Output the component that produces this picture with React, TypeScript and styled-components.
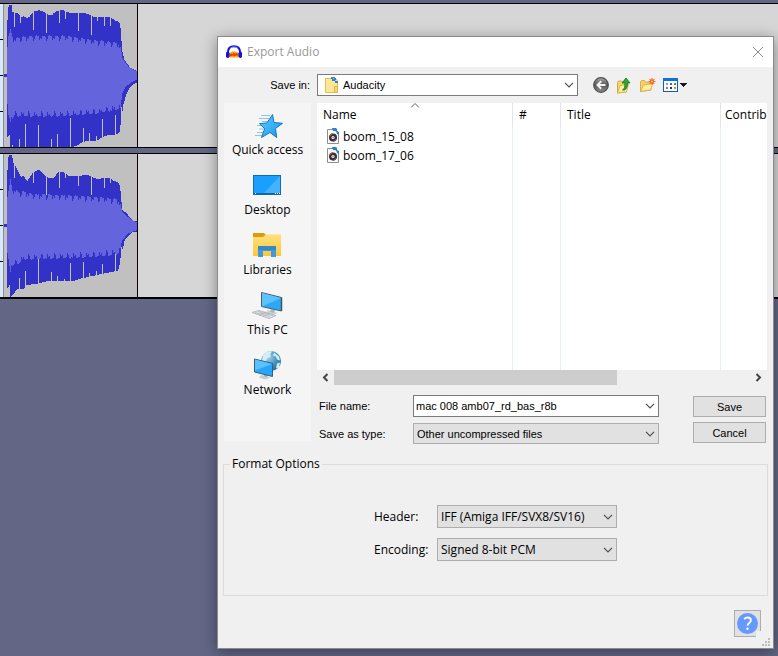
import React from "react";
import styled, { createGlobalStyle } from "styled-components";

const UI_FONT = '"Open Sans", "Noto Sans", sans-serif';
const FORM_FONT = '"Liberation Sans", Arial, sans-serif';

const GlobalStyle = createGlobalStyle`
  * { box-sizing: border-box; }
  body { margin: 0; background: #636685; font-family: ${UI_FONT}; font-size: 12px; line-height: 16px; color: #000; }
  button, input, select { font: inherit; color: inherit; margin: 0; }
`;

/* ---------- Editor behind the dialog ---------- */

const Workspace = styled.div`
  position: relative;
  min-height: 100vh;
  overflow: hidden;
  background: #636685;
  padding-top: 3px;
`;

const Tracks = styled.div`
  display: flex;
  flex-direction: column;
  gap: 5px;
`;

const TrackRow = styled.div`
  display: flex;
  height: 145px;
  border-top: 1px solid #000;
  border-bottom: 1px solid #000;
  background: #d6d6d6;
`;

const Ruler = styled.div`
  display: flex;
  flex-direction: column;
  justify-content: space-evenly;
  width: 4px;
  background: #d8e8ff;
  border-right: 1px solid #8c8c8c;
`;

const Tick = styled.span`
  height: 1px;
  background: #000;
`;

const Clip = styled.div`
  display: flex;
  width: 134px;
  background: #c0c0c0;
  border-right: 1px solid #100000;
`;

const TracksEnd = styled.div`
  height: 1px;
  background: #000;
`;

type Point = [number, number];

interface Wave {
  top: Point[];
  bottom: Point[];
  rmsTop: Point[];
  rmsBottom: Point[];
  topGaps: Point[];
  bottomGaps: Point[];
}

/* Envelopes are sampled at three units per column. */
const leftWave: Wave = {
  top: [[10,48],[13,8],[16,3],[23,3],[24,23],[30,26],[42,28],[50,40],[58,36],[68,42],[76,38],[88,23],[104,19],[116,21],[128,31],[144,34],[148,28],[158,20],[178,18],[188,24],[203,28],[238,26],[250,30],[268,38],[318,39],[333,50],[342,52],[348,60],[354,138],[360,166],[368,178],[378,190],[399,201]],
  bottom: [[10,398],[16,393],[19,429],[203,429],[220,424],[233,416],[250,410],[278,410],[298,398],[313,393],[338,391],[346,383],[350,358],[352,308],[356,326],[358,300],[366,273],[376,253],[388,240],[399,236]],
  rmsTop: [[10,128],[13,96],[19,76],[24,96],[30,98],[90,92],[188,92],[280,106],[342,112],[350,128],[354,160],[360,170],[373,188],[399,203]],
  rmsBottom: [[10,300],[13,333],[19,353],[23,333],[30,322],[100,323],[188,322],[278,314],[342,302],[350,308],[354,268],[363,250],[380,236],[399,226]],
  topGaps: [[31,68],[49,56],[88,78],[127,86],[166,56],[184,46],[223,81],[262,92],[280,50],[301,66],[319,66]],
  bottomGaps: [[25,423],[46,405],[64,360],[103,363],[142,405],[160,390],[199,342],[238,372],[256,387],[277,396],[295,345],[334,333]],
};

const rightWave: Wave = {
  top: [[10,48],[13,8],[16,3],[23,3],[28,28],[34,35],[44,56],[50,68],[58,66],[70,81],[78,68],[86,57],[100,48],[110,50],[118,60],[133,72],[148,71],[163,55],[178,55],[193,65],[208,67],[250,63],[278,75],[313,71],[328,80],[344,86],[348,98],[354,168],[366,176],[378,191],[388,201],[399,201]],
  bottom: [[10,403],[16,393],[19,429],[26,423],[38,405],[58,405],[68,393],[98,389],[128,382],[210,380],[233,373],[278,363],[308,357],[342,350],[348,323],[352,278],[356,288],[360,261],[373,245],[388,233],[399,233]],
  rmsTop: [[10,128],[13,110],[19,76],[24,106],[34,102],[46,112],[58,108],[83,116],[188,120],[278,126],[342,132],[350,148],[354,173],[378,195],[399,205]],
  rmsBottom: [[10,298],[19,353],[24,322],[48,312],[58,302],[188,298],[278,294],[342,286],[350,278],[354,258],[373,238],[399,228]],
  topGaps: [[31,71],[88,87],[127,123],[166,101],[184,73],[223,95],[262,123],[301,101],[319,86]],
  bottomGaps: [[46,372],[64,351],[103,315],[142,354],[160,366],[181,375],[199,327],[238,324],[256,357],[277,351],[295,330],[334,300]],
};

const JITTER = [3, 4, 6, 19, 14, 3, 2, 5, 4, 17, 9, 12, 4];

function sample(points: Point[], x: number) {
  for (let i = 1; i < points.length; i++) {
    if (x <= points[i][0]) {
      const [x0, y0] = points[i - 1];
      const [x1, y1] = points[i];
      return y0 + ((y1 - y0) * Math.max(0, x - x0)) / (x1 - x0);
    }
  }
  return points[points.length - 1][1];
}

function columns(wave: Wave, rms: boolean) {
  let d = "";
  for (let col = 3; col < 133; col++) {
    const x = col * 3 + 1;
    let top = sample(rms ? wave.rmsTop : wave.top, x);
    let bottom = sample(rms ? wave.rmsBottom : wave.bottom, x);
    if (rms) {
      if (x > 24 && x < 350) {
        top += JITTER[col % 13];
        bottom += 18 - JITTER[(col + 5) % 13];
      }
    } else {
      const topGap = wave.topGaps.find(([gx]) => Math.floor(gx / 3) === col);
      const bottomGap = wave.bottomGaps.find(([gx]) => Math.floor(gx / 3) === col);
      if (topGap) top = topGap[1];
      if (bottomGap) bottom = bottomGap[1];
    }
    const y0 = Math.round(top / 3);
    const y1 = Math.round(bottom / 3);
    d += `M${col} ${y0}h1V${y1}h-1z`;
  }
  return d;
}

const Waveform = ({ wave }: { wave: Wave }) => (
  <svg width="133" height="143" viewBox="0 0 133 143" shapeRendering="crispEdges" aria-hidden="true">
    <rect x="0" y="70" width="4" height="3" fill="#3232c8" />
    <path d={columns(wave, false)} fill="#3232c8" />
    <path d={columns(wave, true)} fill="#6464dc" />
  </svg>
);

const Track = ({ wave }: { wave: Wave }) => (
  <TrackRow>
    <Ruler><Tick /><Tick /><Tick /></Ruler>
    <Clip><Waveform wave={wave} /></Clip>
  </TrackRow>
);

/* ---------- Dialog frame ---------- */

const Dialog = styled.section`
  position: absolute;
  top: 36px;
  left: 217px;
  right: 4px;
  background: #f0f0f0;
  border: 1px solid #8b8b8f;
  box-shadow: 0 3px 14px rgba(0, 0, 0, 0.4);
`;

const TitleBar = styled.header`
  display: flex;
  align-items: center;
  gap: 5px;
  height: 30px;
  padding: 0 9px 0 8px;
  background: #fff;
  color: #999;
`;

const Title = styled.h1`
  flex: 1;
  margin: 0;
  font-size: 12px;
  font-weight: 400;
`;

const IconButton = styled.button`
  display: flex;
  align-items: center;
  justify-content: center;
  padding: 0;
  border: 0;
  background: transparent;
`;

const Browser = styled.div`
  display: grid;
  grid-template-columns: 87px minmax(0, 1fr);
  column-gap: 6px;
  align-items: start;
  padding: 0 6px;
`;

const LookInLabel = styled.label`
  padding: 10px 1px 0 0;
  text-align: right;
  font-family: ${FORM_FONT};
  font-size: 11px;
`;

const LookInBar = styled.div`
  display: flex;
  align-items: center;
  height: 36px;
`;

const Tools = styled.div`
  display: flex;
  align-items: center;
  gap: 7px;
  margin-left: 15px;
`;

/* ---------- Combo boxes ---------- */

const ComboFrame = styled.div<{ $light?: boolean; $width?: number; $height?: number }>`
  display: flex;
  align-items: center;
  position: relative;
  width: ${(p) => (p.$width ? `${p.$width}px` : "100%")};
  height: ${(p) => p.$height ?? 22}px;
  background: ${(p) => (p.$light ? "#fff" : "#e1e1e1")};
  border: 1px solid ${(p) => (p.$light ? "#7a7a7a" : "#adadad")};
`;

const Select = styled.select<{ $form?: boolean; $indent?: number }>`
  appearance: none;
  width: 100%;
  height: 100%;
  border: 0;
  border-radius: 0;
  outline: 0;
  background: transparent;
  padding: 0 20px 0 ${(p) => p.$indent ?? 3}px;
  font-family: ${(p) => (p.$form ? FORM_FONT : UI_FONT)};
  font-size: ${(p) => (p.$form ? 11 : 12)}px;
`;

const TextInput = styled.input`
  flex: 1;
  min-width: 0;
  height: 100%;
  border: 0;
  outline: 0;
  background: transparent;
  padding: 0 2px;
  font-family: ${FORM_FONT};
  font-size: 11px;
`;

const ChevronSlot = styled.span`
  position: absolute;
  right: 3px;
  top: 0;
  bottom: 0;
  display: flex;
  align-items: center;
  pointer-events: none;
`;

const FolderSlot = styled.span`
  position: absolute;
  left: 6px;
  top: 0;
  bottom: 0;
  display: flex;
  align-items: center;
  pointer-events: none;
`;

const Chevron = () => (
  <ChevronSlot>
    <svg width="10" height="6" viewBox="0 0 10 6" fill="none" stroke="#505050" strokeWidth="1.2" aria-hidden="true">
      <path d="M1 .8 5 4.8 9 .8" />
    </svg>
  </ChevronSlot>
);

/* ---------- Places bar ---------- */

const Places = styled.nav`
  display: flex;
  flex-direction: column;
  gap: 5px;
  background: #f5f5f5;
  padding-bottom: 43px;
`;

const Place = styled.button`
  display: flex;
  flex-direction: column;
  align-items: center;
  border: 0;
  background: transparent;
  padding: 7px 0 0;
  white-space: nowrap;
`;

/* ---------- File list ---------- */

const FileArea = styled.div`
  display: flex;
  flex-direction: column;
`;

const ListView = styled.div`
  height: 267px;
  overflow: hidden;
  background: #fff;
`;

const FileTable = styled.table`
  width: 100%;
  height: 100%;
  table-layout: fixed;
  border-collapse: separate;
  border-spacing: 0;
`;

const ColumnHead = styled.th<{ $width?: number; $last?: boolean }>`
  position: relative;
  width: ${(p) => (p.$width ? `${p.$width}px` : "auto")};
  height: 24px;
  padding: 0 0 0 ${(p) => (p.$last ? 4 : 6)}px;
  border-right: ${(p) => (p.$last ? "0" : "1px solid #e5e5e5")};
  font-weight: 400;
  text-align: left;
  white-space: nowrap;
`;

const SortMark = styled.svg`
  position: absolute;
  top: 0;
  left: 50%;
  transform: translateX(-50%);
`;

const Cell = styled.td<{ $last?: boolean }>`
  height: 19px;
  padding: 0 0 0 9px;
  border-right: ${(p) => (p.$last ? "0" : "1px solid #e8f1fb")};
`;

const Filler = styled.tr`
  height: 100%;
`;

const FileName = styled.span`
  display: flex;
  align-items: center;
  gap: 2px;
  height: 19px;
`;

const ScrollBar = styled.div`
  display: flex;
  align-items: stretch;
  height: 15px;
`;

const ScrollTrack = styled.div`
  flex: 1;
`;

const ScrollThumb = styled.div`
  width: 68%;
  height: 15px;
  background: #cdcdcd;
`;

const ScrollButton = styled(IconButton)`
  width: 17px;
`;

/* ---------- Name and type ---------- */

const NameForm = styled.div`
  display: flex;
  gap: 34px;
  padding: 10px 1px 0 0;
`;

const Fields = styled.div`
  flex: 1;
  display: grid;
  grid-template-columns: 96px minmax(0, 1fr);
  row-gap: 6px;
  align-items: center;
  font-family: ${FORM_FONT};
  font-size: 11px;
`;

const FieldLabel = styled.label`
  padding-left: 2px;
`;

const Actions = styled.div`
  display: flex;
  flex-direction: column;
  gap: 5px;
  padding-top: 1px;
`;

const PushButton = styled.button`
  width: 73px;
  height: 21px;
  padding: 0;
  border: 1px solid #adadad;
  background: #e1e1e1;
  font-family: ${FORM_FONT};
  font-size: 11px;
`;

/* ---------- Format options ---------- */

const OptionsBox = styled.fieldset`
  margin: 12px 5px 0;
  padding: 33px 0 34px;
  min-width: 0;
  border: 1px solid #dcdcdc;
`;

const Legend = styled.legend`
  margin-left: 6px;
  padding: 0 2px;
`;

const OptionGrid = styled.div`
  display: grid;
  grid-template-columns: 63px 180px;
  row-gap: 10px;
  justify-content: center;
  align-items: center;
`;

const Footer = styled.footer`
  display: flex;
  justify-content: flex-end;
  padding: 14px 12px 11px;
`;

const HelpButton = styled(IconButton)`
  width: 27px;
  height: 27px;
  border: 1px solid #adadad;
  background: #e1e1e1;
`;

const SizeGrip = styled.span`
  position: absolute;
  right: 0;
  bottom: 0;
  width: 17px;
  height: 17px;
  background: #f0f0f0;
`;

/* ---------- Icons ---------- */

const AudacityIcon = () => (
  <svg width="16" height="16" viewBox="0 0 16 16" aria-hidden="true">
    <path d="M3 13V9.500l2-1.500 1.500-1 1 1 1-1 1.500 1 1.500 0 1.500 1.500V13l-2 .8-1-.6-2 .6-2-.6-1.500.6z" fill="#ffb000" />
    <path d="M3 10.800l2-1.300 1.500.5 1-1.500 1.500 1.200 1.500-.7 1.500 1.200 1 .6-1 1-2-.2-1.500.9-2-.9-1.500.8z" fill="#ee3a00" />
    <path d="M2 9V8C2 4.300 4.500 2.200 8 2.200s6 2.100 6 5.800V9" fill="none" stroke="#1212e6" strokeWidth="2" />
    <path d="M4.500 3.900C6.500 2.600 9.500 2.600 11.500 3.900" fill="none" stroke="#8a9bff" strokeWidth=".9" />
    <rect x="0" y="7.500" width="3.500" height="6.500" rx="1.700" fill="#1212e6" />
    <rect x="12.500" y="7.500" width="3.500" height="6.500" rx="1.700" fill="#1212e6" />
  </svg>
);

const CloseIcon = () => (
  <svg width="12" height="12" viewBox="0 0 12 12" stroke="#8a8a8a" strokeWidth="1" aria-hidden="true">
    <path d="M1 1l10 10M11 1L1 11" />
  </svg>
);

const SyncMark = () => (
  <g fill="#2485cf">
    <path d="M6 0h4l1 1v3L9 3 7 3z" />
    <path d="M10 3l3 1v3l-2-1z" />
  </g>
);

const FolderSheetIcon = () => (
  <svg width="16" height="18" viewBox="0 0 16 18" aria-hidden="true">
    <path d="M1.500 2.500h10l2 2v12h-12z" fill="#ffe694" stroke="#e2bd55" />
    <path d="M10.500 10.500h3v6h-3z" fill="#f8d775" stroke="#dcb64d" />
    <path d="M7 1h4v1h1v3h2v2h-3V5H8V3H7z" fill="#2f86c8" />
    <path d="M9 2h1v1H9zM11 4h1v1h-1z" fill="#8cc4ee" />
  </svg>
);

const AudioFileIcon = () => (
  <svg width="15" height="17" viewBox="0 0 15 17" aria-hidden="true">
    <path d="M1.500 1.500h8l3 3v11h-11z" fill="#fafafa" stroke="#8e8e8e" />
    <circle cx="7" cy="9.500" r="4" fill="#3b3034" />
    <path d="M4 8a3.500 3.500 0 0 1 3-2.500" fill="none" stroke="#c0603e" strokeWidth="1" />
    <path d="M10 11a3.500 3.500 0 0 1-3 2.500" fill="none" stroke="#75599a" strokeWidth="1" />
    <circle cx="7" cy="9.500" r="1.600" fill="#f3e9dd" />
    <circle cx="7" cy="9.500" r=".6" fill="#555" />
    <SyncMark />
  </svg>
);

const BackIcon = () => (
  <svg width="16" height="16" viewBox="0 0 16 16" aria-hidden="true">
    <defs>
      <linearGradient id="ball" x1="0" y1="0" x2="0" y2="1">
        <stop offset="0" stopColor="#a8a8a8" /><stop offset=".5" stopColor="#585858" /><stop offset="1" stopColor="#8f8f8f" />
      </linearGradient>
    </defs>
    <circle cx="8" cy="8" r="7.300" fill="url(#ball)" stroke="#4f4f4f" strokeWidth="1.200" />
    <path d="M12.500 8H5M8.200 4.300L4.500 8l3.700 3.700" fill="none" stroke="#f4f4f4" strokeWidth="2" />
  </svg>
);

const UpIcon = () => (
  <svg width="16" height="17" viewBox="0 0 16 17" aria-hidden="true">
    <path d="M1.500 5.500l1-1.500h3l1 1h3.500v10l-8.500 1z" fill="#f6d873" stroke="#c79a2c" strokeWidth=".8" />
    <path d="M1.500 16L4 8.500l8.500-1.500-2 8z" fill="#ffee9f" stroke="#d2a93c" strokeWidth=".8" />
    <path d="M6.500 13c2-1 2.500-3 2.300-7H6L10 1l4 5h-2.500c.2 4-1.500 8-5 7z" fill="#35a534" stroke="#147a1b" strokeWidth=".8" />
  </svg>
);

const NewFolderIcon = () => (
  <svg width="17" height="16" viewBox="0 0 17 16" aria-hidden="true">
    <path d="M1.500 14.500V5l1-1.500h3l1 1.500H12v8z" fill="#f4d36b" stroke="#cda23a" strokeWidth=".8" />
    <path d="M1.500 14.500L4.500 8l9.500-1.500-2.500 6.500z" fill="#ffeda0" stroke="#d2a93c" strokeWidth=".8" />
    <path d="M13 1v7M9.500 4.500h7M10.600 2.100l4.800 4.800M15.400 2.100l-4.800 4.800" stroke="#ff6a1e" strokeWidth="1.100" />
    <circle cx="13" cy="4.500" r="1.500" fill="#ffd9a0" stroke="#e63f12" strokeWidth=".8" />
  </svg>
);

const ViewIcon = () => (
  <svg width="24" height="15" viewBox="0 0 24 15" shapeRendering="crispEdges" aria-hidden="true">
    <rect x=".5" y=".5" width="14" height="13" fill="#fff" stroke="#0a5cd0" />
    <rect x="0" y="0" width="15" height="3" fill="#1070e0" />
    <path d="M3 5h2v2H3z" fill="#9b8fc4" /><path d="M7 5h2v2H7z" fill="#3b68c8" /><path d="M11 5h2v2h-2z" fill="#33a04a" />
    <path d="M3 9h2v2H3z" fill="#e0663a" /><path d="M7 9h2v2H7z" fill="#1c2f8e" /><path d="M11 9h2v2h-2z" fill="#c79a20" />
    <path d="M17 5h7v1h-1v1h-1v1h-1v1h-1V8h-1V7h-1V6h-1z" fill="#1a1a1a" />
  </svg>
);

const StarIcon = () => (
  <svg width="32" height="32" viewBox="0 0 32 32" aria-hidden="true">
    <defs>
      <linearGradient id="star" x1="0" y1="0" x2="1" y2="1">
        <stop offset="0" stopColor="#62caff" /><stop offset="1" stopColor="#1597ee" />
      </linearGradient>
    </defs>
    <path d="M9 5.500h9M7 8.500h10M10 11.500h6M5 15.500h9M7 19h7M5 22.500h8M3 25.500h8" stroke="#8fc3e6" strokeWidth="1" />
    <path d="M20.500 4.500l1.500 8 8.500.8-7 5.200 1.200 9-6.700-5-8.500 5 3.200-8.800-5.200-5 7.500-.8z" fill="url(#star)" stroke="#1776bd" strokeWidth="1" />
  </svg>
);

const DesktopIcon = () => (
  <svg width="32" height="32" viewBox="0 0 32 32" aria-hidden="true">
    <rect x="1.500" y="5.500" width="27" height="19" fill="#1a9fff" stroke="#0f6fb4" />
    <path d="M28 6v17H12z" fill="#45b2ff" />
    <path d="M2 23h26v1.500H2z" fill="#0a66aa" />
    <path d="M3 23.500h1M23 23.500h1M25 23.500h1M27 23.500h1" stroke="#fff" />
  </svg>
);

const LibrariesIcon = () => (
  <svg width="32" height="32" viewBox="0 0 32 32" aria-hidden="true">
    <defs>
      <linearGradient id="folder" x1="0" y1="0" x2="0" y2="1">
        <stop offset="0" stopColor="#ffdf7c" /><stop offset="1" stopColor="#fbc83b" />
      </linearGradient>
    </defs>
    <path d="M1 3h11l2 2-2 2H1z" fill="#dc9c0c" />
    <path d="M1 7h10l3-2.500h15V26H1z" fill="url(#folder)" />
    <path d="M6 27V16h18v11h-5v-6h-8v6z" fill="#3f99dc" />
    <path d="M6 16h18v4H6z" fill="#3289ca" />
  </svg>
);

const ComputerIcon = () => (
  <svg width="32" height="32" viewBox="0 0 32 32" aria-hidden="true">
    <path d="M15 20l8 2 3 1-5 2-6-2z" fill="#cfd4d8" />
    <path d="M19 19l4 1-1 3-4-1z" fill="#aeb6bc" />
    <path d="M9.500 2.500l20 5v13.500l-20-4.500z" fill="#2aa9fb" stroke="#4a5f6d" />
    <path d="M10 3l19 5-19 8.500z" fill="#5cc3ff" />
    <path d="M29.500 7.500v13.500" stroke="#47545c" strokeWidth="1.500" />
    <path d="M0 22.500l7-2 17 5-7 3z" fill="#e6e9eb" stroke="#a7adb2" strokeWidth=".8" />
    <path d="M3 22.500l15 4.300M6 21.500l15 4.300M7 25l7-3M11 26.300l6-3" stroke="#aab0b5" strokeWidth=".8" />
  </svg>
);

const NetworkIcon = () => (
  <svg width="32" height="32" viewBox="0 0 32 32" aria-hidden="true">
    <defs>
      <radialGradient id="globe" cx=".35" cy=".3" r=".8">
        <stop offset="0" stopColor="#a9d6ec" /><stop offset=".5" stopColor="#4e9cc4" /><stop offset="1" stopColor="#1d6690" />
      </radialGradient>
    </defs>
    <circle cx="19" cy="11" r="10" fill="url(#globe)" />
    <path d="M11 5c3-4 7-4 9-3.500l-2 3 1 2-4 2-1 3-4-1zM22 2.500l5 4 1 4-3-1-1-3-3-1zM25 13.500l3-1-1 5-3 1z" fill="#d7edf5" />
    <path d="M9 25l6 1 3 2-5 1.500-6-2z" fill="#c9ced2" />
    <path d="M12 23l3 1v3l-3-1z" fill="#9fa8ae" />
    <path d="M2.500 9l18 4.500v13l-18-4.500z" fill="#25a6fa" stroke="#3c5e74" />
    <path d="M3 9.500l17 4.500L3 20.500z" fill="#59c1ff" />
  </svg>
);

const HelpIcon = () => (
  <svg width="21" height="21" viewBox="0 0 21 21" fill="none" aria-hidden="true">
    <circle cx="10.500" cy="10.500" r="10.500" fill="#6699ff" />
    <path d="M7.200 6.200c1-1.400 2.200-1.700 3.400-1.700 2 0 3.300 1 3.300 2.700 0 2.700-3.400 2.900-3.400 5.600" stroke="#fff" strokeWidth="1.800" />
    <circle cx="10.500" cy="15.800" r="1.200" fill="#fff" />
  </svg>
);

const places = [
  { name: "Quick access", Icon: StarIcon },
  { name: "Desktop", Icon: DesktopIcon },
  { name: "Libraries", Icon: LibrariesIcon },
  { name: "This PC", Icon: ComputerIcon },
  { name: "Network", Icon: NetworkIcon },
];

const files = ["boom_15_08", "boom_17_06"];

const ScrollArrow = ({ d }: { d: string }) => (
  <svg width="7" height="9" viewBox="0 0 7 9" fill="none" stroke="#444" strokeWidth="2" aria-hidden="true">
    <path d={d} />
  </svg>
);

export default function App() {
  return (
    <Workspace>
      <GlobalStyle />
      <Tracks>
        <Track wave={leftWave} />
        <Track wave={rightWave} />
      </Tracks>
      <TracksEnd />

      <Dialog role="dialog" aria-labelledby="dialog-title">
        <TitleBar>
          <AudacityIcon />
          <Title id="dialog-title">Export Audio</Title>
          <IconButton type="button" aria-label="Close"><CloseIcon /></IconButton>
        </TitleBar>

        <Browser>
          <LookInLabel htmlFor="look-in">Save in:</LookInLabel>
          <LookInBar>
            <ComboFrame $light $width={261}>
              <FolderSlot><FolderSheetIcon /></FolderSlot>
              <Select id="look-in" $form $indent={25} defaultValue="Audacity">
                <option>Audacity</option>
              </Select>
              <Chevron />
            </ComboFrame>
            <Tools>
              <IconButton type="button" aria-label="Back"><BackIcon /></IconButton>
              <IconButton type="button" aria-label="Up one level"><UpIcon /></IconButton>
              <IconButton type="button" aria-label="Create new folder"><NewFolderIcon /></IconButton>
              <IconButton type="button" aria-label="View menu"><ViewIcon /></IconButton>
            </Tools>
          </LookInBar>

          <Places>
            {places.map(({ name, Icon }) => (
              <Place key={name} type="button"><Icon />{name}</Place>
            ))}
          </Places>

          <FileArea>
            <ListView>
              <FileTable>
                <thead>
                  <tr>
                    <ColumnHead $width={196}>
                      Name
                      <SortMark width="9" height="5" viewBox="0 0 9 5" fill="none" stroke="#606060">
                        <path d="M.5 4.500l4-4 4 4" />
                      </SortMark>
                    </ColumnHead>
                    <ColumnHead $width={48}>#</ColumnHead>
                    <ColumnHead $width={160}>Title</ColumnHead>
                    <ColumnHead $last>Contrib</ColumnHead>
                  </tr>
                </thead>
                <tbody>
                  {files.map((name) => (
                    <tr key={name}>
                      <Cell><FileName><AudioFileIcon />{name}</FileName></Cell>
                      <Cell /><Cell /><Cell $last />
                    </tr>
                  ))}
                  <Filler><Cell /><Cell /><Cell /><Cell $last /></Filler>
                </tbody>
              </FileTable>
            </ListView>
            <ScrollBar>
              <ScrollButton type="button" aria-label="Scroll left"><ScrollArrow d="M5.500 1L2 4.500 5.500 8" /></ScrollButton>
              <ScrollTrack><ScrollThumb /></ScrollTrack>
              <ScrollButton type="button" aria-label="Scroll right"><ScrollArrow d="M1.500 1L5 4.500 1.500 8" /></ScrollButton>
            </ScrollBar>

            <NameForm>
              <Fields>
                <FieldLabel htmlFor="file-name">File name:</FieldLabel>
                <ComboFrame $light>
                  <TextInput id="file-name" type="text" defaultValue="mac 008 amb07_rd_bas_r8b" />
                  <Chevron />
                </ComboFrame>
                <FieldLabel htmlFor="file-type">Save as type:</FieldLabel>
                <ComboFrame $height={21}>
                  <Select id="file-type" $form defaultValue="Other uncompressed files">
                    <option>Other uncompressed files</option>
                  </Select>
                  <Chevron />
                </ComboFrame>
              </Fields>
              <Actions>
                <PushButton type="button">Save</PushButton>
                <PushButton type="button">Cancel</PushButton>
              </Actions>
            </NameForm>
          </FileArea>
        </Browser>

        <OptionsBox>
          <Legend>Format Options</Legend>
          <OptionGrid>
            <label htmlFor="header">Header:</label>
            <ComboFrame $height={23}>
              <Select id="header" defaultValue="IFF (Amiga IFF/SVX8/SV16)">
                <option>IFF (Amiga IFF/SVX8/SV16)</option>
              </Select>
              <Chevron />
            </ComboFrame>
            <label htmlFor="encoding">Encoding:</label>
            <ComboFrame $height={23}>
              <Select id="encoding" defaultValue="Signed 8-bit PCM">
                <option>Signed 8-bit PCM</option>
              </Select>
              <Chevron />
            </ComboFrame>
          </OptionGrid>
        </OptionsBox>

        <Footer>
          <HelpButton type="button" aria-label="Help"><HelpIcon /></HelpButton>
        </Footer>
        <SizeGrip>
          <svg width="17" height="17" viewBox="0 0 17 17" fill="#bdbdbd" shapeRendering="crispEdges" aria-hidden="true">
            <path d="M12 7h2v2h-2zM12 10h2v2h-2zM9 10h2v2H9zM12 13h2v2h-2zM9 13h2v2H9zM6 13h2v2H6z" />
          </svg>
        </SizeGrip>
      </Dialog>
    </Workspace>
  );
}
